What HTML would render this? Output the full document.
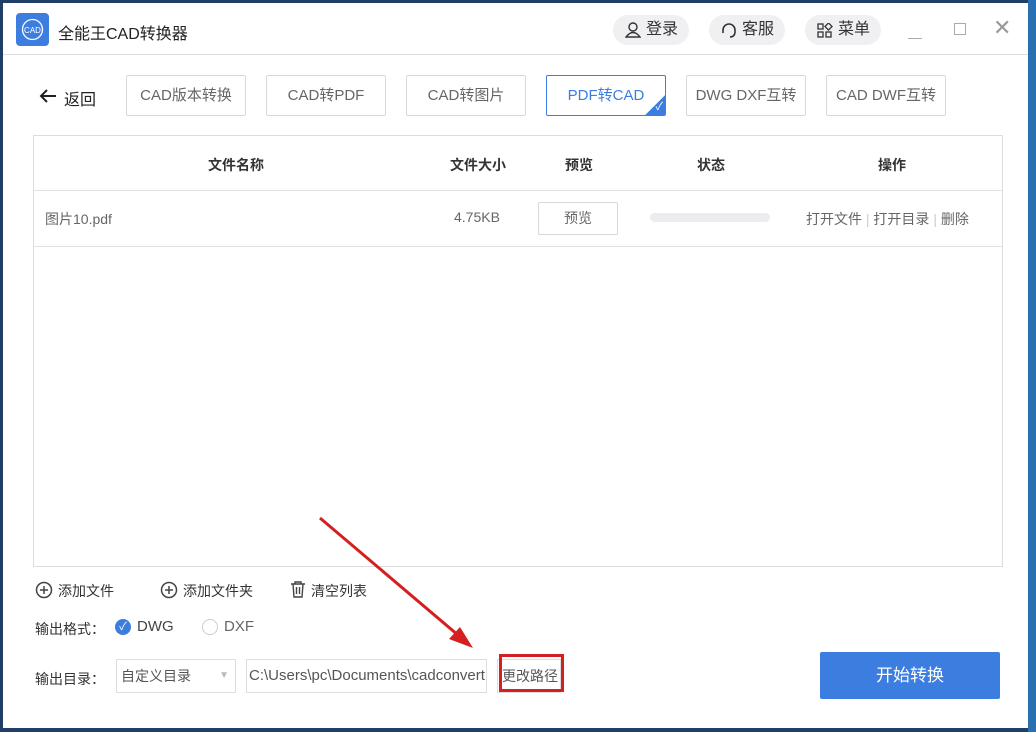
<!DOCTYPE html>
<html><head><meta charset="utf-8"><style>
*{margin:0;padding:0;box-sizing:border-box}
body{width:1036px;height:732px;background:#1f3f66;position:relative;overflow:hidden;font-family:"Liberation Sans","Noto Sans CJK SC",sans-serif;color:#333}
.win{position:absolute;left:3px;top:3px;width:1025px;height:725px;background:#fff}
.a{position:absolute}
.tab{position:absolute;top:72px;width:120px;height:41px;border:1px solid #d8d8d8;border-radius:2px;font-size:15px;color:#666;text-align:center;line-height:39px}
.pill{position:absolute;top:12px;height:30px;border-radius:15px;background:#f0f0f2;font-size:16px;line-height:30px;color:#333;padding-left:33px}
.hd{position:absolute;top:152px;font-size:14px;font-weight:bold;color:#333}
.cell{position:absolute;font-size:14px;color:#666}
</style></head><body>
<div class="a" style="left:1028px;top:0;width:8px;height:732px;background:#2a6fb0"></div>
<div class="win">
 <div class="a" style="left:13px;top:10px;width:33px;height:33px;background:#3b7ee0;border-radius:4px">
  <svg width="33" height="33"><circle cx="16.5" cy="16.5" r="10" fill="none" stroke="#fff" stroke-width="1.3"/><text x="16.5" y="20" font-size="8" fill="#fff" text-anchor="middle" font-family="Liberation Sans">CAD</text></svg>
 </div>
 <div class="a" style="left:55px;top:17px;font-size:16px;color:#222">全能王CAD转换器</div>
 <div class="pill" style="left:610px;width:76px"><svg class="a" style="left:12px;top:7px" width="16" height="16"><circle cx="8" cy="5" r="4" fill="none" stroke="#333" stroke-width="1.4"/><path d="M1 15 Q8 6 15 15 Z" fill="none" stroke="#333" stroke-width="1.4"/></svg>登录</div>
 <div class="pill" style="left:706px;width:76px"><svg class="a" style="left:12px;top:8px" width="16" height="16"><path d="M2 10 V7 A6 6 0 0 1 14 7 V10 M14 10 Q13 14 9 14" fill="none" stroke="#333" stroke-width="1.6"/></svg>客服</div>
 <div class="pill" style="left:802px;width:76px"><svg class="a" style="left:12px;top:8px" width="16" height="16" fill="none" stroke="#333" stroke-width="1.3"><rect x="1" y="1" width="5" height="5"/><rect x="9" y="1" width="5" height="5" transform="rotate(45 11.5 3.5)"/><rect x="1" y="9" width="5" height="5"/><rect x="9" y="9" width="5" height="5"/></svg>菜单</div>
 <div class="a" style="left:905px;top:35px;width:14px;height:1px;background:#aaa"></div>
 <div class="a" style="left:951px;top:20px;width:12px;height:12px;border:1.5px solid #aaa"></div>
 <div class="a" style="left:990px;top:12px;font-size:22px;color:#999">✕</div>
 <div class="a" style="left:0;top:51px;width:1025px;height:1px;background:#ddd"></div>
 <svg class="a" style="left:35px;top:85px" width="20" height="16"><path d="M18 8 H3 M9 2 L3 8 L9 14" fill="none" stroke="#222" stroke-width="2"/></svg>
 <div class="a" style="left:61px;top:83px;font-size:16px;color:#222">返回</div>
 <div class="tab" style="left:123px">CAD版本转换</div>
 <div class="tab" style="left:263px">CAD转PDF</div>
 <div class="tab" style="left:403px">CAD转图片</div>
 <div class="tab" style="left:543px;border-color:#3b7ee0;color:#3b7ee0;overflow:hidden">PDF转CAD
  <div class="a" style="right:-14px;bottom:-14px;width:28px;height:28px;background:#3b7ee0;transform:rotate(45deg)"></div>
  <span class="a" style="right:2px;bottom:-12px;color:#fff;font-size:11px">✓</span></div>
 <div class="tab" style="left:683px">DWG DXF互转</div>
 <div class="tab" style="left:823px">CAD DWF互转</div>
 <div class="a" style="left:30px;top:132px;width:970px;height:432px;border:1px solid #dcdcdc"></div>
 <div class="a" style="left:31px;top:187px;width:968px;height:1px;background:#e2e2e2"></div>
 <div class="a" style="left:31px;top:243px;width:968px;height:1px;background:#e2e2e2"></div>
 <div class="hd" style="left:205px">文件名称</div>
 <div class="hd" style="left:447px">文件大小</div>
 <div class="hd" style="left:562px">预览</div>
 <div class="hd" style="left:694px">状态</div>
 <div class="hd" style="left:875px">操作</div>
 <div class="cell" style="left:42px;top:206px">图片10.pdf</div>
 <div class="cell" style="left:451px;top:206px">4.75KB</div>
 <div class="a" style="left:535px;top:199px;width:80px;height:33px;border:1px solid #d8d8d8;border-radius:2px;font-size:14px;color:#666;text-align:center;line-height:31px">预览</div>
 <div class="a" style="left:647px;top:210px;width:120px;height:9px;border-radius:5px;background:#ececf0"></div>
 <div class="cell" style="left:803px;top:206px">打开文件 <span style="color:#ccc">|</span> 打开目录 <span style="color:#ccc">|</span> 删除</div>
 <svg class="a" style="left:32px;top:578px" width="18" height="18"><circle cx="9" cy="9" r="7.5" fill="none" stroke="#444" stroke-width="1.5"/><path d="M9 5 V13 M5 9 H13" stroke="#444" stroke-width="1.5"/></svg>
 <div class="a" style="left:55px;top:578px;font-size:14px;color:#333">添加文件</div>
 <svg class="a" style="left:157px;top:578px" width="18" height="18"><circle cx="9" cy="9" r="7.5" fill="none" stroke="#444" stroke-width="1.5"/><path d="M9 5 V13 M5 9 H13" stroke="#444" stroke-width="1.5"/></svg>
 <div class="a" style="left:180px;top:578px;font-size:14px;color:#333">添加文件夹</div>
 <svg class="a" style="left:286px;top:577px" width="18" height="18" fill="none" stroke="#444" stroke-width="1.4"><path d="M2 4 H16 M6 4 V2 H12 V4 M4 4 L5 17 H13 L14 4 M7.5 7 V14 M10.5 7 V14"/></svg>
 <div class="a" style="left:308px;top:578px;font-size:14px;color:#333">清空列表</div>
 <div class="a" style="left:32px;top:616px;font-size:14px;color:#333">输出格式：</div>
 <div class="a" style="left:112px;top:616px;width:16px;height:16px;border-radius:50%;background:#3b7ee0;color:#fff;font-size:11px;text-align:center;line-height:16px">✓</div>
 <div class="a" style="left:134px;top:615px;font-size:15px;color:#444">DWG</div>
 <div class="a" style="left:199px;top:616px;width:16px;height:16px;border-radius:50%;border:1px solid #ccc"></div>
 <div class="a" style="left:221px;top:615px;font-size:15px;color:#666">DXF</div>
 <div class="a" style="left:32px;top:666px;font-size:14px;color:#333">输出目录：</div>
 <div class="a" style="left:113px;top:656px;width:120px;height:34px;border:1px solid #ddd;font-size:14px;color:#555;line-height:32px;padding-left:4px">自定义目录<span class="a" style="right:6px;top:0;color:#bbb;font-size:10px">▼</span></div>
 <div class="a" style="left:243px;top:656px;width:241px;height:34px;border:1px solid #ddd;font-size:15px;color:#555;line-height:32px;padding-left:2px;white-space:nowrap;overflow:hidden">C:\Users\pc\Documents\cadconvert</div>
 <div class="a" style="left:494px;top:656px;width:64px;height:34px;border:1px solid #ddd;font-size:14px;color:#555;line-height:32px;padding-left:4px">更改路径</div>
 <div class="a" style="left:496px;top:651px;width:65px;height:38px;border:3px solid #d42020"></div>
 <svg class="a" style="left:0;top:0" width="1025" height="725"><line x1="317" y1="515" x2="462" y2="638" stroke="#d42020" stroke-width="3"/><path d="M470 645 L446 636 L457 624 Z" fill="#d42020"/></svg>
 <div class="a" style="left:817px;top:649px;width:180px;height:47px;background:#3b7ee0;border-radius:2px;color:#fff;font-size:17px;text-align:center;line-height:47px">开始转换</div>
</div>
</body></html>
